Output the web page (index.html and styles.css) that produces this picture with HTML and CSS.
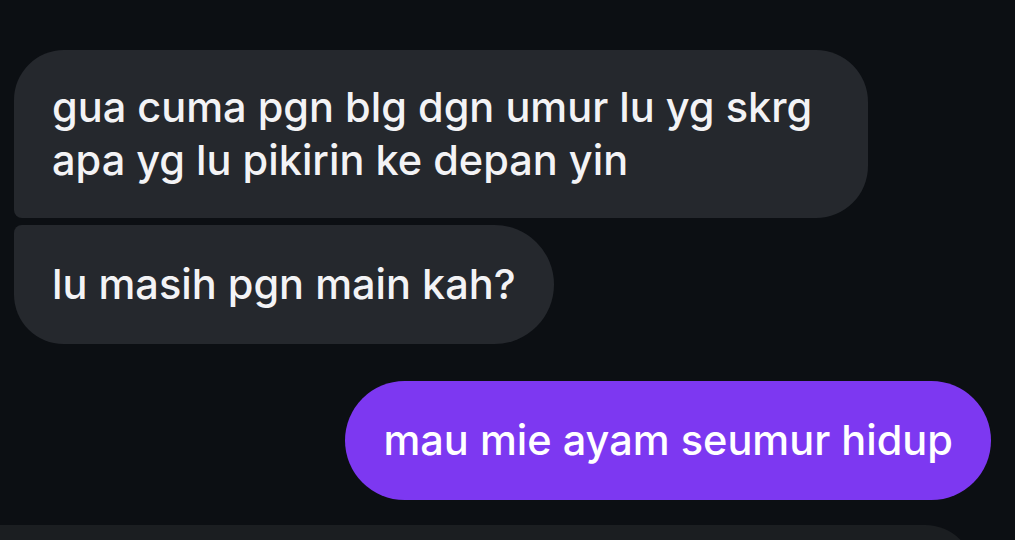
FILE: index.html
```html
<!DOCTYPE html>
<html>
<head>
<meta charset="utf-8">
<link rel="stylesheet" href="styles.css">
</head>
<body>
<div class="thread">
  <div class="msg in first">gua cuma pgn blg dgn umur lu yg skrg apa yg lu pikirin ke depan yin</div>
  <div class="msg in last">lu masih pgn main kah?</div>
  <div class="msg out">mau mie ayam seumur hidup</div>
  <div class="composer"></div>
</div>
</body>
</html>
```
FILE: styles.css
```css
html, body {
  margin: 0;
  padding: 0;
  background: #0c0f13;
  height: 100%;
  overflow: hidden;
}
body {
  font-family: "Inter", "Liberation Sans", sans-serif;
  font-weight: 500;
}
.thread {
  box-sizing: border-box;
  height: 540px;
  overflow: hidden;
  display: flex;
  flex-direction: column;
  padding-top: 50px;
}
.msg {
  box-sizing: border-box;
  flex-shrink: 0;
  width: fit-content;
  font-size: 41.5px;
  line-height: 53px;
  padding: 31px 38px 31px 38px;
  color: #f3f3f5;
}
.in {
  background: #25282d;
  margin-left: 14px;
}
.first {
  max-width: 854px;
  border-radius: 50px 52px 52px 8px;
}
.last {
  margin-top: 7px;
  padding-top: 33px;
  padding-bottom: 33px;
  border-radius: 8px 60px 60px 50px;
}
.out {
  align-self: flex-end;
  margin-right: 24px;
  margin-top: 37px;
  background: #7d38f1;
  color: #ffffff;
  border-radius: 60px;
  padding-top: 33px;
  padding-bottom: 33px;
}
.composer {
  flex-shrink: 0;
  margin-top: 25px;
  width: 975px;
  height: 100px;
  background: #1b1e21;
  border-top-right-radius: 50px;
}
```
